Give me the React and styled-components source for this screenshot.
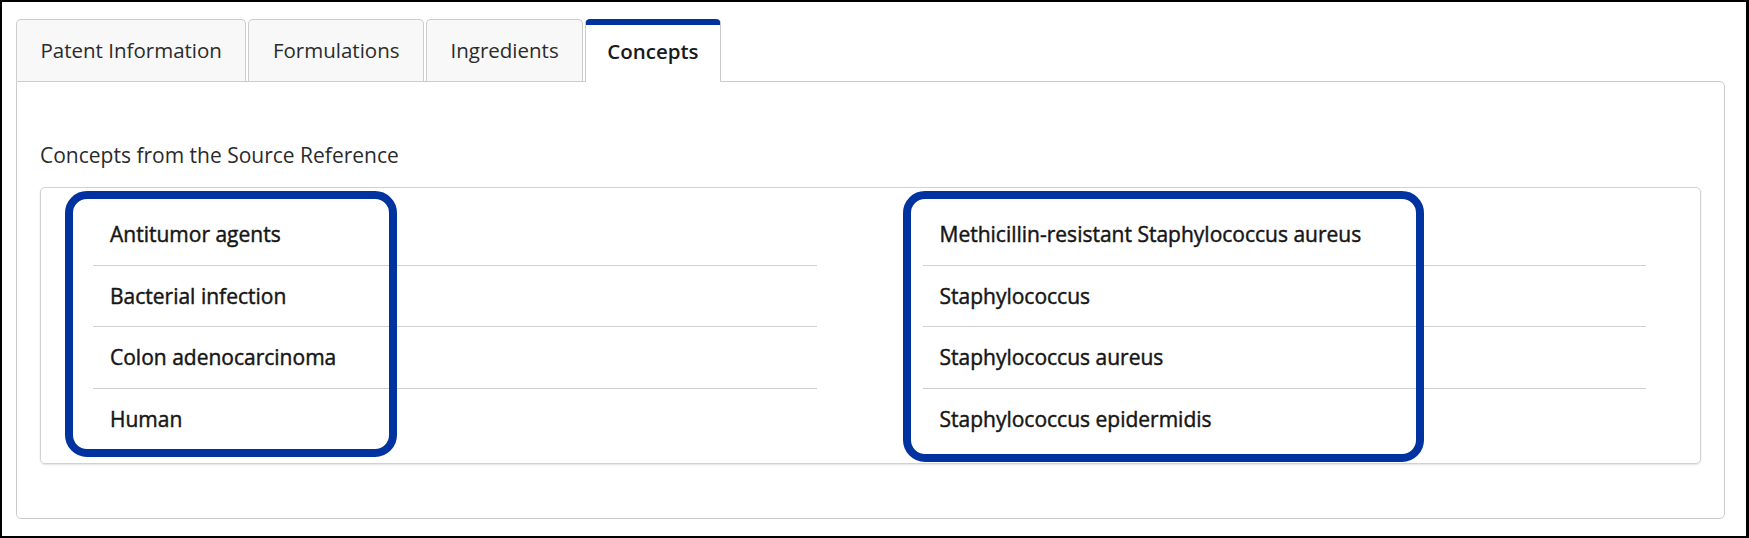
import styled, { createGlobalStyle } from "styled-components"

const GlobalStyle = createGlobalStyle`
  html, body {
    margin: 0;
    padding: 0;
    background: #fff;
  }
  body {
    font-family: "Open Sans", "Noto Sans", sans-serif;
    color: #222;
  }
`

const Frame = styled.div`
  box-sizing: border-box;
  width: 1749px;
  height: 538px;
  border: 2px solid #000;
  border-right-width: 3px;
  padding: 17px 21px 0 14px;
`

const TabBar = styled.div`
  display: flex;
  gap: 2px;
  position: relative;
  z-index: 1;
  margin-bottom: -1px;
`

const Tab = styled.div`
  box-sizing: border-box;
  height: ${(p) => (p.$active ? "63px" : "62px")};
  display: flex;
  align-items: center;
  padding: ${(p) => (p.$active ? "0 21px 5px" : "0 23.5px")};
  border: 1px solid #ccc;
  border-bottom: none;
  border-top: ${(p) => (p.$active ? "6px solid #0033a0" : "1px solid #ccc")};
  border-radius: 5px 5px 0 0;
  background: ${(p) => (p.$active ? "#fff" : "#f8f8f8")};
  font-size: 20.5px;
  font-weight: ${(p) => (p.$active ? 600 : 400)};
  color: ${(p) => (p.$active ? "#1a1a1a" : "#2b2b2b")};
  line-height: 1;
`

const Panel = styled.div`
  box-sizing: border-box;
  height: 438px;
  border: 1px solid #ccc;
  border-radius: 0 5px 5px 5px;
  padding: 59px 23px 0 23px;
`

const Heading = styled.div`
  font-size: 21px;
  line-height: 28px;
  color: #2b2b2b;
  margin-bottom: 18px;
`

const Card = styled.div`
  box-sizing: border-box;
  height: 277px;
  border: 1px solid #d2d2d2;
  border-radius: 5px;
  box-shadow: 0 1px 2px rgba(0, 0, 0, 0.12);
  display: grid;
  grid-template-columns: 1fr 1fr;
  padding: 16px 0 14px;
`

const Column = styled.div`
  position: relative;
  padding: 0 54px 0 52px;
`

const List = styled.ul`
  list-style: none;
  margin: 0;
  padding: 0;
`

const Item = styled.li`
  box-sizing: border-box;
  height: 61.5px;
  display: flex;
  align-items: center;
  padding: 0 17px;
  font-size: 21px;
  font-weight: 400;
  color: #161616;
  -webkit-text-stroke: 0.45px #161616;
  border-bottom: 1px solid #d0d0d0;

  &:last-child {
    border-bottom: none;
  }
`

const Highlight = styled.div`
  position: absolute;
  top: -13px;
  left: ${(p) => p.$left}px;
  width: ${(p) => p.$width}px;
  height: ${(p) => p.$height}px;
  box-sizing: border-box;
  border: 8px solid #0033a0;
  border-radius: 22px;
  pointer-events: none;
`

const tabs = ["Patent Information", "Formulations", "Ingredients", "Concepts"]

const columns = [
  {
    items: ["Antitumor agents", "Bacterial infection", "Colon adenocarcinoma", "Human"],
    box: { left: 24, width: 332, height: 266 },
  },
  {
    items: [
      "Methicillin-resistant Staphylococcus aureus",
      "Staphylococcus",
      "Staphylococcus aureus",
      "Staphylococcus epidermidis",
    ],
    box: { left: 32, width: 521, height: 271 },
  },
]

export default function App() {
  return (
    <>
      <GlobalStyle />
      <Frame>
        <TabBar>
          {tabs.map((t) => (
            <Tab key={t} $active={t === "Concepts"}>
              {t}
            </Tab>
          ))}
        </TabBar>
        <Panel>
          <Heading>Concepts from the Source Reference</Heading>
          <Card>
            {columns.map((col, i) => (
              <Column key={i}>
                <List>
                  {col.items.map((it) => (
                    <Item key={it}>{it}</Item>
                  ))}
                </List>
                <Highlight $left={col.box.left} $width={col.box.width} $height={col.box.height} />
              </Column>
            ))}
          </Card>
        </Panel>
      </Frame>
    </>
  )
}
